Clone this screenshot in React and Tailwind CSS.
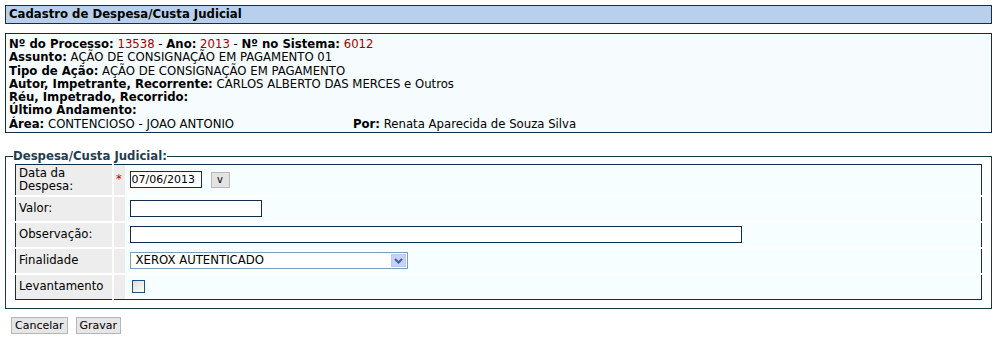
import React from 'react';

const font = { fontFamily: '"DejaVu Sans", Verdana, sans-serif' };

const Row = ({ label, req, children, tall }) => (
    <tr className="border-b-2 border-white last:border-b-0">
        <td className={`w-[97px] bg-[#ededed] pl-[3px] align-middle leading-[13px] ${tall ? 'h-[31px]' : 'h-[26px]'}`}>{label}</td>
        <td className="w-[12px] bg-[#ededed] border-l-2 border-white text-center align-middle text-[#cc0000]">{req ? '*' : ''}</td>
        <td className="pl-[5px] align-middle">{children}</td>
    </tr>
);

const App = () => {
    return (
        <div className="w-[997px] h-[337px] bg-white text-[11.7px] text-black px-[5px] pt-[5px]" style={font}>
            <div className="h-[19px] border border-[#162b46] bg-[#b8d0ec] pl-[3px] font-bold leading-[17px]">
                Cadastro de Despesa/Custa Judicial
            </div>

            <div className="mt-[9px] border border-[#162b46] bg-[#f6fcfe] pl-[3px] pt-[4px] pb-[1px] leading-[13.3px]">
                <div>
                    <b>Nº do Processo:</b> <span className="text-[#a00000]">13538</span> - <b>Ano:</b>{' '}
                    <span className="text-[#a00000]">2013</span> - <b>Nº no Sistema:</b>{' '}
                    <span className="text-[#a00000]">6012</span>
                </div>
                <div><b>Assunto:</b> AÇÃO DE CONSIGNAÇÃO EM PAGAMENTO 01</div>
                <div><b>Tipo de Ação:</b> AÇÃO DE CONSIGNAÇÃO EM PAGAMENTO</div>
                <div><b>Autor, Impetrante, Recorrente:</b> CARLOS ALBERTO DAS MERCES e Outros</div>
                <div><b>Réu, Impetrado, Recorrido:</b></div>
                <div><b>Último Andamento:</b></div>
                <div className="flex">
                    <div className="w-[344px]"><b>Área:</b> CONTENCIOSO - JOAO ANTONIO</div>
                    <div><b>Por:</b> Renata Aparecida de Souza Silva</div>
                </div>
            </div>

            <fieldset className="mt-[16px] w-[987px] border border-[#1c3a3c] pl-[7px] pr-[9px] pb-[8px] pt-[1px]">
                <legend className="font-bold text-[#1f3d4f] leading-[14px] px-0">Despesa/Custa Judicial:</legend>
                <table className="ml-[2px] w-[967px] border border-[#162b46] bg-[#f6feff] border-collapse">
                    <tbody>
                        <Row label={<>Data da<br />Despesa:</>} req tall>
                            <div className="flex items-center gap-[9px]">
                                <input
                                    defaultValue="07/06/2013"
                                    className="w-[72px] h-[17px] border border-[#162b46] bg-white px-[1px] text-[11px] outline-none"
                                    style={font}
                                />
                                <button className="w-[19px] h-[16px] border border-[#b8b8b8] bg-[#e3e3e3] text-[10px] leading-[14px]" style={font}>v</button>
                            </div>
                        </Row>
                        <Row label="Valor:">
                            <input className="w-[132px] h-[17px] border border-[#162b46] bg-white outline-none" />
                        </Row>
                        <Row label="Observação:">
                            <input className="w-[612px] h-[17px] border border-[#162b46] bg-white outline-none" />
                        </Row>
                        <Row label="Finalidade">
                            <div className="w-[278px] h-[17px] border border-[#7f9db9] bg-white flex items-center justify-between pl-[5px] pr-[1px]">
                                <span>XEROX AUTENTICADO</span>
                                <span className="w-[15px] h-[13px] bg-[#c3d3fd] border border-[#b7c9f4] flex items-center justify-center">
                                    <svg width="9" height="6" viewBox="0 0 9 6">
                                        <path d="M1 1 L4.5 4.5 L8 1" stroke="#4d6185" strokeWidth="2" fill="none" />
                                    </svg>
                                </span>
                            </div>
                        </Row>
                        <Row label="Levantamento">
                            <div className="ml-[2px] w-[13px] h-[13px] border border-[#1c5180] bg-gradient-to-br from-[#dcdcd7] to-white" />
                        </Row>
                    </tbody>
                </table>
            </fieldset>

            <div className="mt-[8px] ml-[6px] flex gap-[8px]">
                <button className="h-[17px] px-[3px] border border-[#b5b5b5] bg-[#e6e6e6] text-[11px] leading-[15px]" style={font}>Cancelar</button>
                <button className="h-[17px] px-[3px] border border-[#b5b5b5] bg-[#e6e6e6] text-[11px] leading-[15px]" style={font}>Gravar</button>
            </div>
        </div>
    );
};

export default App;
